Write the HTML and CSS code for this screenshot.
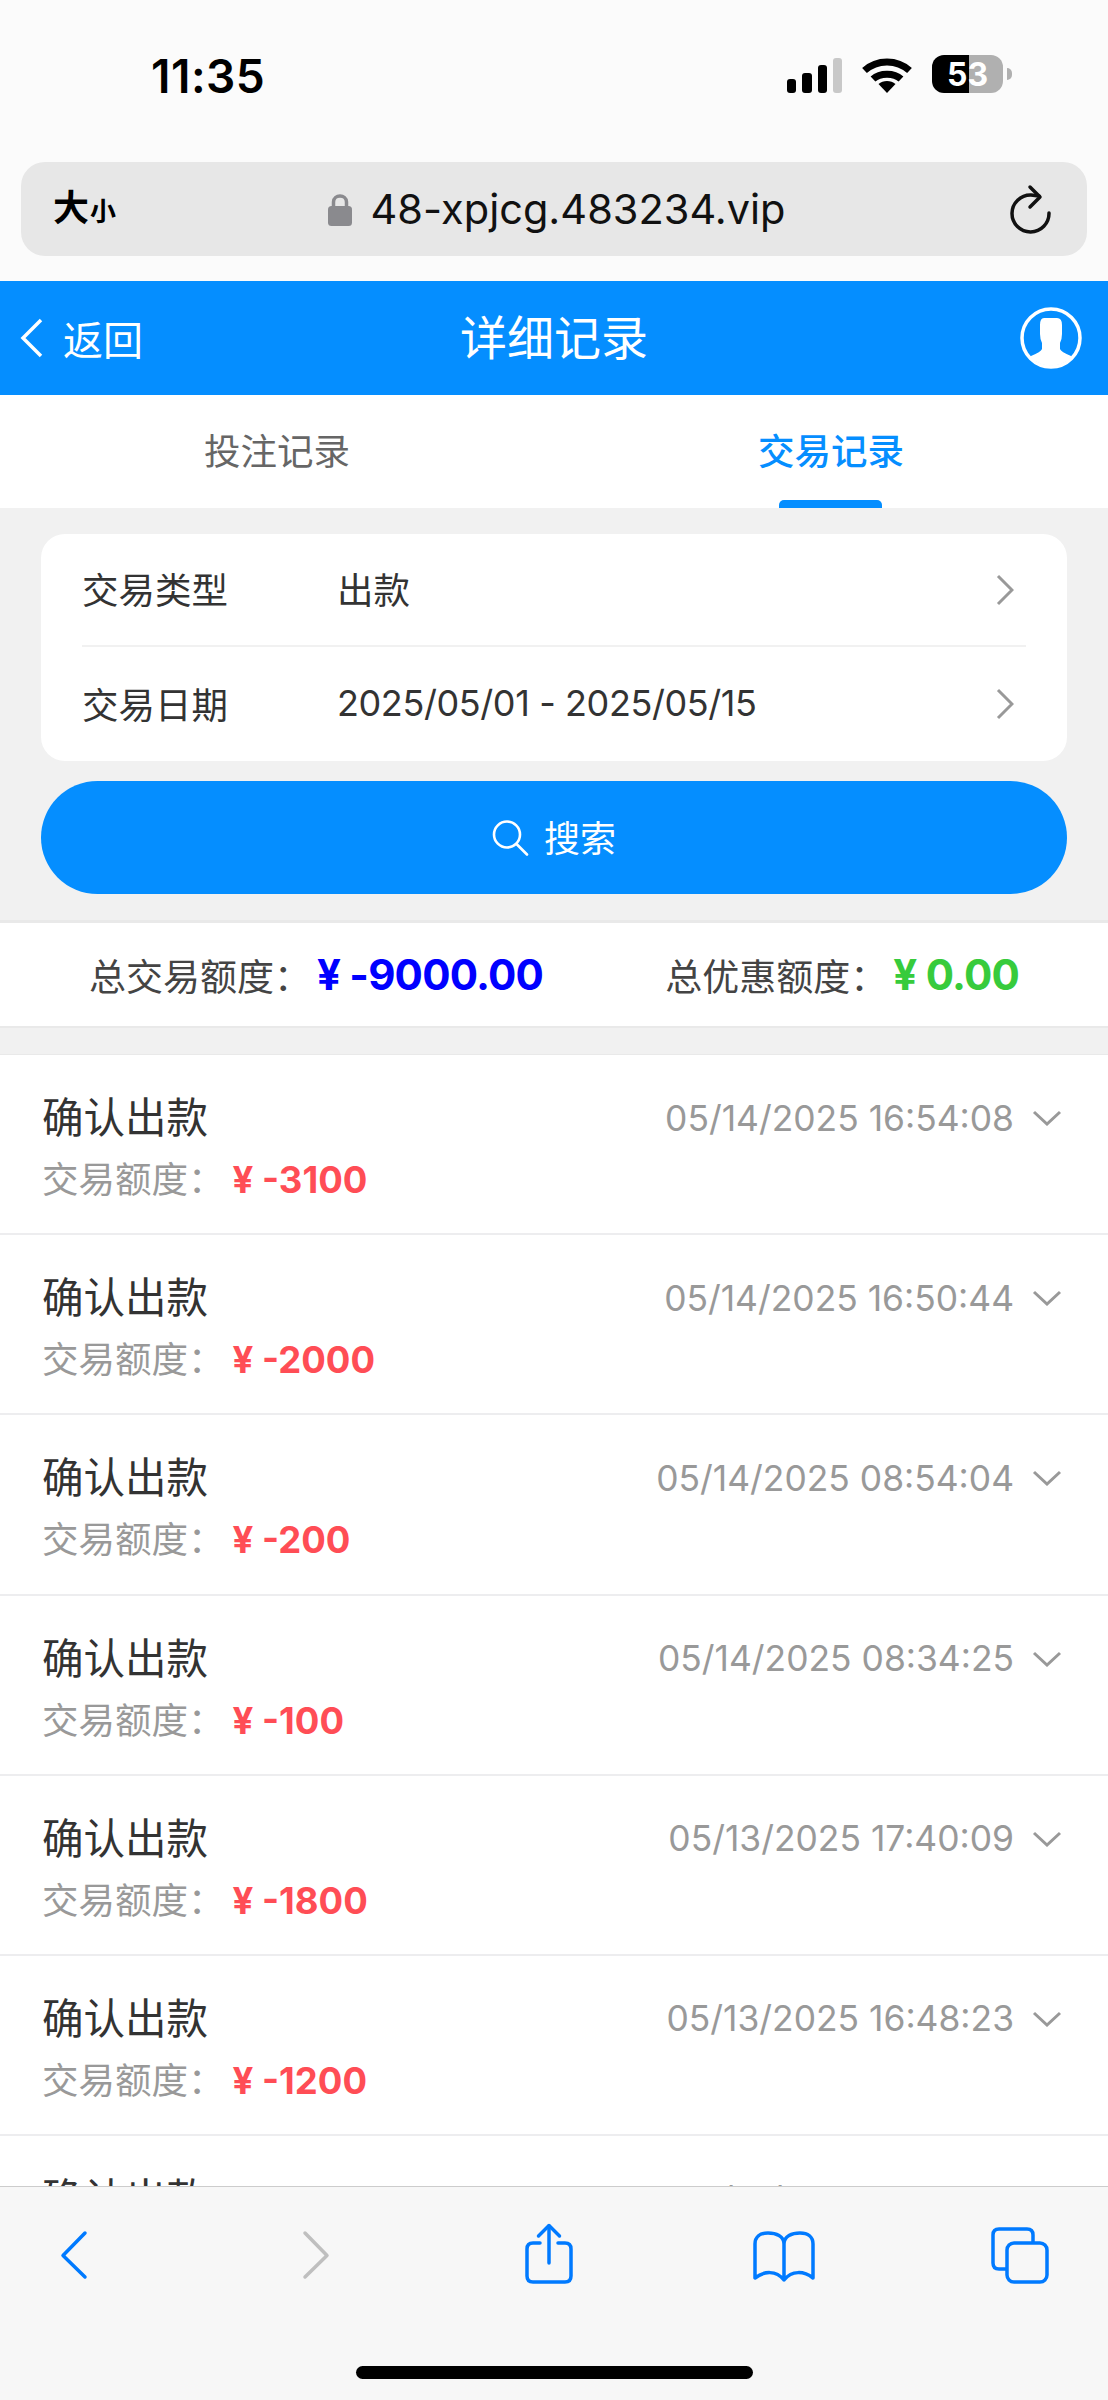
FILE: index.html
```html
<!DOCTYPE html>
<html lang="zh-CN">
<head>
  <meta charset="UTF-8">
  <meta name="viewport" content="width=device-width, initial-scale=1.0">
  <title>详细记录</title>
  <link rel="stylesheet" href="styles.css">
</head>
<body>
  <div class="phone">
    <!-- 系统状态栏 + 地址栏 -->
    <div class="browser-top">
      <div class="status-bar">
        <span class="time">11:35</span>
        <div class="status-icons">
          <svg class="signal" viewBox="0 0 55 35">
            <rect x="0" y="21" width="9" height="14" rx="3"/>
            <rect x="15" y="15" width="10" height="20" rx="3"/>
            <rect x="31" y="7" width="9" height="28" rx="3"/>
            <rect class="signal-off" x="46" y="0" width="9" height="35" rx="3"/>
          </svg>
          <svg class="wifi" viewBox="0 0 50 35">
            <path d="M2.5 12.5 C15 1 35 1 47.5 12.5" />
            <path d="M11 21 C18 14.5 32 14.5 39 21" />
            <path class="wifi-dot" d="M16.5 26 C21 22 29 22 33.5 26 L25 35 Z" />
          </svg>
          <div class="battery"><span>53</span></div>
          <div class="battery-nub"></div>
        </div>
      </div>
      <div class="url-bar">
        <div class="text-size">大<small>小</small></div>
        <div class="url">
          <svg class="lock" viewBox="0 0 24 33">
            <path class="lock-loop" d="M5.5 15 V9 C5.5 1 18.5 1 18.5 9 V15" />
            <rect x="0" y="13" width="24" height="20" rx="3.5"/>
          </svg>
          <span>48-xpjcg.483234.vip</span>
        </div>
        <svg class="reload" viewBox="0 0 48 52">
          <path d="M41 30 A18.5 18.5 0 1 1 23 12 L31 13" />
          <path d="M22 4 L32 14 L22 24" />
        </svg>
      </div>
    </div>

    <header class="page-header">
      <a class="back">
        <svg class="back-icon" viewBox="0 0 24 40"><path d="M21 2 L3 20 L21 38" /></svg>
        <span>返回</span>
      </a>
      <h1>详细记录</h1>
      <svg class="avatar" viewBox="0 0 64 64">
        <defs><clipPath id="avatar-clip"><circle cx="32" cy="32" r="28"/></clipPath></defs>
        <circle class="avatar-ring" cx="32" cy="32" r="29"/>
        <path clip-path="url(#avatar-clip)" d="M25 12 H38 Q43 12 43 19 V28 Q43 33 41 37 V43 Q42 46 52 50 L56 64 H8 L12 50 Q22 46 23 43 V37 Q21 33 21 28 V19 Q21 12 25 12 Z"/>
      </svg>
    </header>

    <nav class="tabs">
      <a class="tab">投注记录</a>
      <a class="tab active">交易记录</a>
    </nav>

    <main class="content">
      <section class="filter">
        <div class="filter-card">
          <div class="filter-row">
            <span class="filter-label">交易类型</span>
            <span class="filter-value">出款</span>
            <svg class="chevron-right" viewBox="0 0 18 32"><path d="M2 2 L16 16 L2 30" /></svg>
          </div>
          <div class="filter-row">
            <span class="filter-label">交易日期</span>
            <span class="filter-value date-range">2025/05/01 - 2025/05/15</span>
            <svg class="chevron-right" viewBox="0 0 18 32"><path d="M2 2 L16 16 L2 30" /></svg>
          </div>
        </div>
        <button class="search-btn">
          <svg class="search-icon" viewBox="0 0 38 36">
            <circle cx="15" cy="14.5" r="13"/>
            <path d="M24.5 24 L35 34.5" />
          </svg>
          <span>搜索</span>
        </button>
      </section>

      <section class="summary">
        <div class="summary-item">
          <span class="summary-label">总交易额度：</span>
          <span class="summary-value blue"><span class="yen">¥</span> -9000.00</span>
        </div>
        <div class="summary-item">
          <span class="summary-label">总优惠额度：</span>
          <span class="summary-value green"><span class="yen">¥</span> 0.00</span>
        </div>
      </section>

      <section class="records">
        <div class="record">
          <div class="record-top">
            <span class="record-title">确认出款</span>
            <span class="record-date">05/14/2025 16:54:08</span>
            <svg class="chevron-down" viewBox="0 0 30 16"><path d="M2 2 L15 14 L28 2" /></svg>
          </div>
          <div class="record-amount">交易额度：<span class="amount"><span class="yen">¥</span> -3100</span></div>
        </div>
        <div class="record">
          <div class="record-top">
            <span class="record-title">确认出款</span>
            <span class="record-date">05/14/2025 16:50:44</span>
            <svg class="chevron-down" viewBox="0 0 30 16"><path d="M2 2 L15 14 L28 2" /></svg>
          </div>
          <div class="record-amount">交易额度：<span class="amount"><span class="yen">¥</span> -2000</span></div>
        </div>
        <div class="record">
          <div class="record-top">
            <span class="record-title">确认出款</span>
            <span class="record-date">05/14/2025 08:54:04</span>
            <svg class="chevron-down" viewBox="0 0 30 16"><path d="M2 2 L15 14 L28 2" /></svg>
          </div>
          <div class="record-amount">交易额度：<span class="amount"><span class="yen">¥</span> -200</span></div>
        </div>
        <div class="record">
          <div class="record-top">
            <span class="record-title">确认出款</span>
            <span class="record-date">05/14/2025 08:34:25</span>
            <svg class="chevron-down" viewBox="0 0 30 16"><path d="M2 2 L15 14 L28 2" /></svg>
          </div>
          <div class="record-amount">交易额度：<span class="amount"><span class="yen">¥</span> -100</span></div>
        </div>
        <div class="record">
          <div class="record-top">
            <span class="record-title">确认出款</span>
            <span class="record-date">05/13/2025 17:40:09</span>
            <svg class="chevron-down" viewBox="0 0 30 16"><path d="M2 2 L15 14 L28 2" /></svg>
          </div>
          <div class="record-amount">交易额度：<span class="amount"><span class="yen">¥</span> -1800</span></div>
        </div>
        <div class="record">
          <div class="record-top">
            <span class="record-title">确认出款</span>
            <span class="record-date">05/13/2025 16:48:23</span>
            <svg class="chevron-down" viewBox="0 0 30 16"><path d="M2 2 L15 14 L28 2" /></svg>
          </div>
          <div class="record-amount">交易额度：<span class="amount"><span class="yen">¥</span> -1200</span></div>
        </div>
        <div class="record">
          <div class="record-top">
            <span class="record-title">确认出款</span>
            <span class="record-date">05/13/2025 15:36:17</span>
            <svg class="chevron-down" viewBox="0 0 30 16"><path d="M2 2 L15 14 L28 2" /></svg>
          </div>
        </div>
      </section>
    </main>

    <!-- Safari 底部工具栏 -->
    <footer class="toolbar">
      <div class="toolbar-icons">
        <svg class="tool tool-back" viewBox="0 0 30 64"><path d="M26 11 L4 33.5 L26 55" /></svg>
        <svg class="tool tool-forward" viewBox="0 0 30 64"><path d="M4 11 L26 33.5 L4 55" /></svg>
        <svg class="tool tool-share" viewBox="0 0 50 64">
          <path d="M16 21 H9 Q3 21 3 27 V54 Q3 60 9 60 H41 Q47 60 47 54 V27 Q47 21 41 21 H34" />
          <path d="M25 4 V41" />
          <path d="M14.5 14 L25 3.5 L35.5 14" />
        </svg>
        <svg class="tool tool-book" viewBox="0 0 64 64">
          <path d="M32 22 C32 14 40 11 48 11 C56 11 61 15 61 22 V56 C52 49 40 48 32 58 C24 48 12 49 3 56 V22 C3 15 8 11 16 11 C24 11 32 14 32 22 V58" />
        </svg>
        <svg class="tool tool-pages" viewBox="0 0 62 64">
          <path d="M44 20 V13 Q44 7 38 7 H10 Q4 7 4 13 V41 Q4 47 10 47 H17" />
          <rect x="18" y="21" width="40" height="39" rx="7"/>
        </svg>
      </div>
      <div class="home-bar"></div>
    </footer>
  </div>
</body>
</html>
```

FILE: styles.css
```css
* {
  box-sizing: border-box;
}
body {
  margin: 0;
  padding: 0;
  font-family: "Liberation Sans", "Noto Sans CJK SC", sans-serif;
  background-color: #f1f1f1;
  color: #333;
}
svg {
  display: block;
  flex-shrink: 0;
}
svg path {
  fill: none;
}
.phone {
  width: 1108px;
  height: 2400px;
  display: flex;
  flex-direction: column;
  overflow: hidden;
}

/* browser top */
.browser-top {
  height: 281px;
  background-color: #fbfbfb;
  flex-shrink: 0;
}
.status-bar {
  height: 162px;
  padding: 55px 96px 0 151px;
  display: flex;
  justify-content: space-between;
  align-items: flex-start;
}
.time {
  font-family: Inter, sans-serif;
  font-size: 46px;
  font-weight: 600;
  line-height: 42px;
  color: #000;
  letter-spacing: 0.5px;
}
.status-icons {
  display: flex;
  align-items: center;
}
.signal {
  width: 55px;
  height: 35px;
  margin-top: 2px;
  fill: #000;
}
.signal-off {
  fill: #c8c8c8;
}
.wifi {
  width: 50px;
  height: 35px;
  margin: 2px 0 0 20px;
}
.wifi path {
  stroke: #000;
  stroke-width: 7;
}
.wifi .wifi-dot {
  fill: #000;
  stroke: none;
}
.battery {
  width: 71px;
  height: 38px;
  margin-left: 20px;
  border-radius: 12px;
  background: linear-gradient(to right, #000 52%, #b0b0b0 52%);
  display: flex;
  justify-content: center;
  align-items: center;
}
.battery span {
  font-family: Inter, sans-serif;
  font-size: 32px;
  font-weight: 700;
  color: #fff;
}
.battery-nub {
  width: 5px;
  height: 12px;
  margin-left: 4px;
  background-color: #b0b0b0;
  border-radius: 0 6px 6px 0;
}
.url-bar {
  height: 94px;
  margin: 0 21px;
  padding: 0 31px 0 32px;
  background-color: #e7e7e7;
  border-radius: 24px;
  display: grid;
  grid-template-columns: 1fr auto 1fr;
  align-items: center;
}
.text-size {
  font-size: 36px;
  font-weight: 700;
  color: #000;
  line-height: 1;
}
.text-size small {
  font-size: 26px;
  margin-left: 1px;
}
.url {
  display: flex;
  align-items: center;
  gap: 18px;
  font-family: Inter, sans-serif;
  font-size: 41.5px;
  color: #111;
  margin-left: 5px;
}
.lock {
  width: 24px;
  height: 33px;
  fill: #8a8a8e;
}
.lock .lock-loop {
  stroke: #8a8a8e;
  stroke-width: 3.5;
}
.reload {
  width: 48px;
  height: 52px;
  justify-self: end;
}
.reload path {
  stroke: #111;
  stroke-width: 3.5;
  stroke-linecap: round;
  stroke-linejoin: round;
}

/* page header */
.page-header {
  height: 114px;
  flex-shrink: 0;
  padding: 0 20px;
  background-color: #058eff;
  color: #fff;
  display: grid;
  grid-template-columns: 1fr auto 1fr;
  align-items: center;
}
.page-header h1 {
  margin: 0;
  font-size: 47px;
  font-weight: 400;
  line-height: 1;
}
.back {
  display: flex;
  align-items: center;
  gap: 19px;
  font-size: 40px;
}
.back-icon {
  width: 24px;
  height: 40px;
}
.back-icon path {
  stroke: #fff;
  stroke-width: 3.5;
}
.avatar {
  width: 64px;
  height: 64px;
  justify-self: end;
  margin-right: 5px;
  fill: #fff;
}
.avatar path {
  fill: #fff;
}
.avatar-ring {
  fill: none;
  stroke: #fff;
  stroke-width: 3.5;
}
.tabs {
  height: 113px;
  flex-shrink: 0;
  background-color: #fff;
  display: flex;
}
.tab {
  flex: 1;
  position: relative;
  text-align: center;
  font-size: 36.5px;
  line-height: 116px;
  color: #666;
}
.tab.active {
  color: #058eff;
  font-weight: 500;
}
.tab.active::after {
  content: "";
  position: absolute;
  left: 225px;
  bottom: 0;
  width: 103px;
  height: 8px;
  background-color: #058eff;
  border-radius: 5px 5px 0 0;
}

/* filter */
.content {
  flex: 1;
  min-height: 0;
  overflow: hidden;
}
.filter {
  padding: 26px 41px;
  height: 412px;
}
.filter-card {
  background-color: #fff;
  border-radius: 24px;
  padding: 0 41px;
  height: 227px;
}
.filter-row {
  height: 111px;
  display: flex;
  align-items: center;
  font-size: 36.5px;
}
.filter-row + .filter-row {
  height: 116px;
  border-top: 2px solid #f1f1f1;
}
.filter-label {
  width: 255px;
  flex-shrink: 0;
  padding-bottom: 2px;
}
.filter-value {
  flex: 1;
  padding-bottom: 2px;
}
.date-range {
  font-family: Inter, sans-serif;
  font-size: 36px;
  letter-spacing: -0.4px;
}
.chevron-right {
  width: 18px;
  height: 32px;
  margin-right: 12px;
}
.chevron-right path {
  stroke: #999;
  stroke-width: 3;
}
.search-btn {
  width: 100%;
  height: 113px;
  margin-top: 20px;
  background-color: #058eff;
  color: #fff;
  border: none;
  border-radius: 57px;
  font-family: inherit;
  font-size: 36px;
  display: flex;
  justify-content: center;
  align-items: center;
  gap: 14px;
}
.search-btn span {
  padding-bottom: 4px;
}
.search-icon {
  width: 38px;
  height: 36px;
  fill: none;
}
.search-icon circle {
  stroke: #fff;
  stroke-width: 2.6;
}
.search-icon path {
  stroke: #fff;
  stroke-width: 2.6;
  stroke-linecap: round;
}

/* summary */
.summary {
  height: 108px;
  padding: 0 89px;
  background-color: #fff;
  border-top: 3px solid #e9e9e9;
  border-bottom: 2px solid #e9e9e9;
  display: flex;
  justify-content: space-between;
  align-items: center;
}
.summary-item {
  display: flex;
  align-items: center;
}
.summary-label {
  font-size: 37px;
  color: #444;
  margin-right: 6px;
}
.summary-value {
  font-family: Inter, "Liberation Sans", sans-serif;
  font-size: 42px;
  font-weight: 700;
  letter-spacing: -0.8px;
}
.blue {
  color: #0000ff;
}
.green {
  color: #37cb3c;
}

/* records */
.records {
  margin-top: 26px;
  background-color: #fff;
  border-top: 1px solid #e9e9e9;
}
.record {
  height: 180.2px;
  padding: 38px 46px 0 42px;
  border-bottom: 2px solid #ededef;
}
.record-top {
  height: 50px;
  display: flex;
  align-items: center;
}
.record-title {
  flex: 1;
  font-size: 41.5px;
  margin-bottom: 6px;
}
.record-date {
  font-family: Inter, sans-serif;
  font-size: 35.4px;
  color: #999;
}
.chevron-down {
  width: 30px;
  height: 16px;
  margin-left: 18px;
}
.chevron-down path {
  stroke: #999;
  stroke-width: 3;
}
.record-amount {
  margin-top: 12px;
  font-size: 36.5px;
  line-height: 50px;
  color: #999;
}
.amount {
  font-family: Inter, "Liberation Sans", sans-serif;
  font-size: 36.5px;
  font-weight: 700;
  color: #ff4d55;
  margin-left: 8px;
}

/* toolbar */
.toolbar {
  height: 214px;
  flex-shrink: 0;
  background-color: #f7f7f7;
  border-top: 1px solid #ccc;
  padding-top: 35px;
  display: flex;
  flex-direction: column;
}
.toolbar-icons {
  display: flex;
  padding-left: 59px;
}
.tool {
  height: 64px;
}
.tool path,
.tool rect {
  fill: none;
  stroke: #007aff;
  stroke-width: 3.5;
  stroke-linecap: round;
  stroke-linejoin: round;
}
.tool-back,
.tool-forward {
  width: 30px;
}
.tool-forward {
  margin-left: 212px;
}
.tool-forward path {
  stroke: #bfbfbf;
}
.tool-share {
  width: 50px;
  margin-left: 193px;
}
.tool-book {
  width: 64px;
  margin-left: 178px;
}
.tool-pages {
  width: 62px;
  margin-left: 173px;
}
.home-bar {
  width: 397px;
  height: 13px;
  margin: 80px auto 0;
  background-color: #000;
  border-radius: 7px;
}
```
